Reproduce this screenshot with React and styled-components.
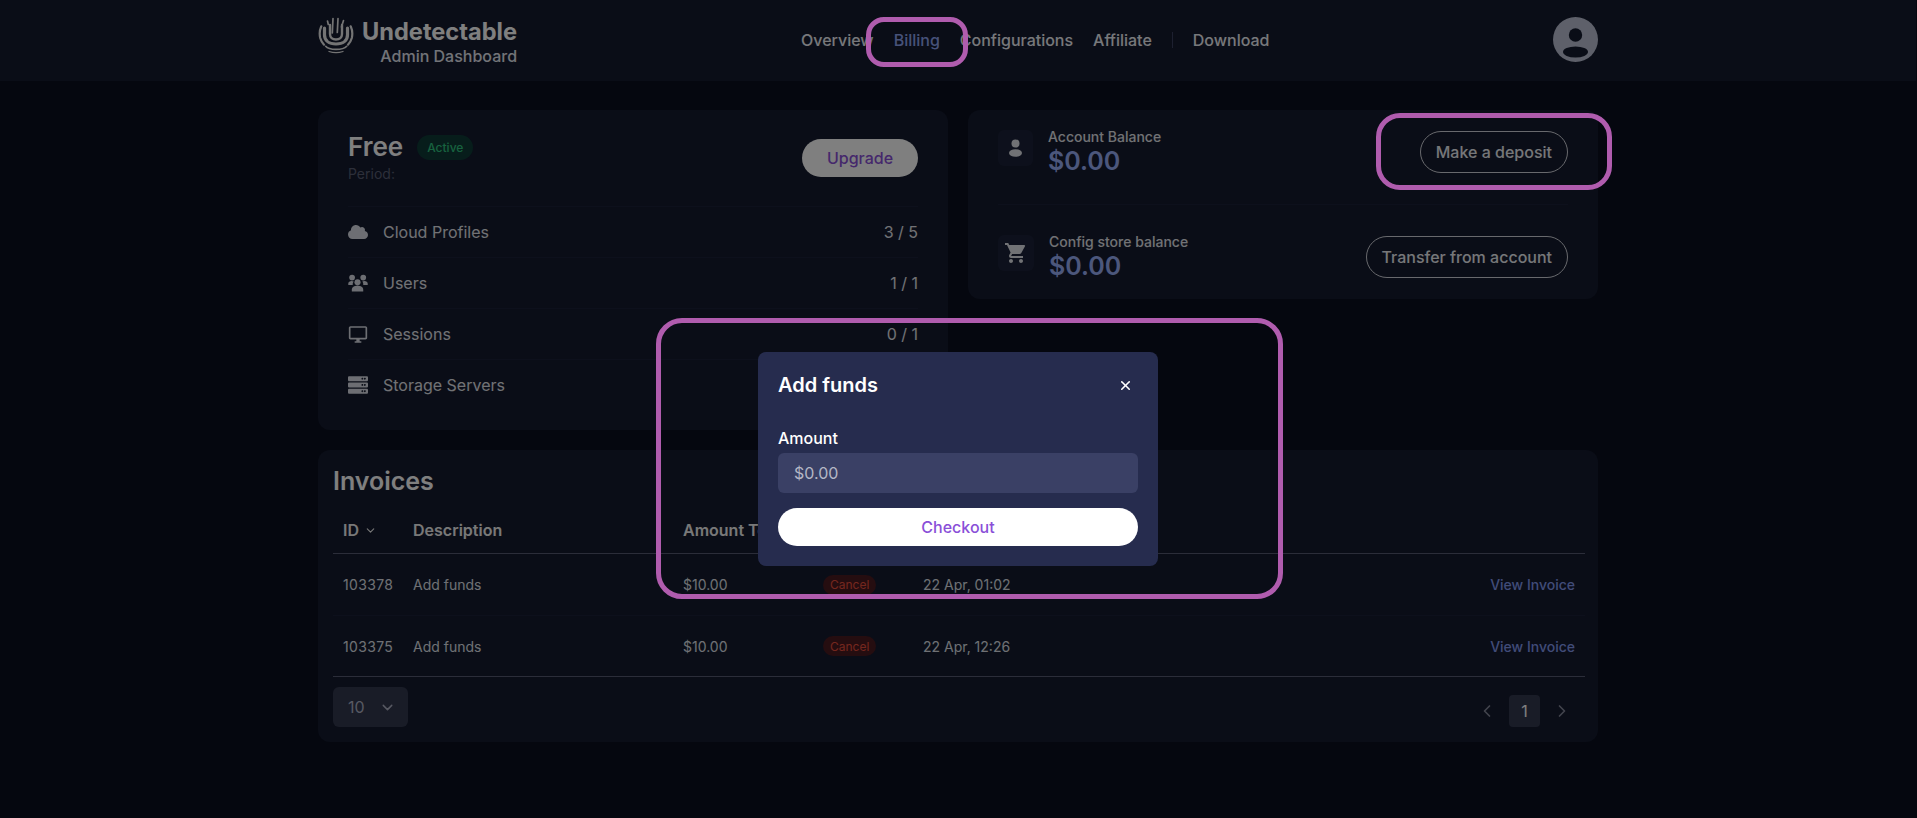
import React from "react";
import styled, { createGlobalStyle } from "styled-components";
import { FaCloud, FaServer } from "react-icons/fa";
import { MdOutlineDesktopWindows, MdShoppingCart } from "react-icons/md";
import { LuChevronDown, LuChevronLeft, LuChevronRight, LuX } from "react-icons/lu";

const Global = createGlobalStyle`
  html, body { margin: 0; padding: 0; background: #0a0e1e; }
  body { width: 1916px; font-family: Inter, "Liberation Sans", sans-serif; color: #fff; min-height: 818px; overflow: hidden; }
  * { box-sizing: border-box; }
`;

const Header = styled.header`
  height: 81px;
  background: #141a2e;
`;
const Wrap = styled.div`
  width: 1280px;
  margin: 0 auto;
`;
const HeaderInner = styled(Wrap)`
  height: 100%;
  display: grid;
  grid-template-columns: 483px auto 1fr;
  align-items: center;
`;
const Brand = styled.div`
  display: flex;
  align-items: flex-start;
  gap: 8px;
  padding-top: 3px;
`;
const BrandText = styled.div`
  display: flex;
  flex-direction: column;
  align-items: flex-end;
`;
const BrandName = styled.span`
  font-size: 23.600px;
  font-weight: 700;
  line-height: 29px;
`;
const BrandSub = styled.span`
  font-size: 16px;
  font-weight: 500;
  line-height: 21px;
  color: #e4e7f0;
`;
const Nav = styled.nav`
  display: flex;
  align-items: center;
  gap: 20px;
  margin-bottom: 2px;
`;
const NavLink = styled.a`
  font-size: 16px;
  font-weight: 500;
  color: ${(p) => (p.$active ? "#8ea4f2" : "#eef0f6")};
`;
const NavDivider = styled.span`
  width: 1px;
  height: 16px;
  background: #3a4060;
`;
const AvatarSlot = styled.div`
  display: flex;
  justify-content: flex-end;
  margin-bottom: 2px;
`;
const Main = styled(Wrap)`
  padding-top: 29px;
`;
const Columns = styled.div`
  display: grid;
  grid-template-columns: 630px 630px;
  gap: 20px;
  align-items: start;
`;
const Card = styled.section`
  background: #141a2e;
  border-radius: 12px;
`;
const PlanCard = styled(Card)`
  padding: 0 30px 20px;
`;
const PlanTop = styled.div`
  height: 96px;
  display: flex;
  align-items: center;
  justify-content: space-between;
`;
const PlanTitleRow = styled.div`
  display: flex;
  align-items: center;
  gap: 14px;
  height: 30px;
  margin-bottom: 2px;
`;
const PlanName = styled.span`
  font-size: 26px;
  font-weight: 600;
  margin-top: -2px;
`;
const ActiveBadge = styled.span`
  font-size: 12px;
  font-weight: 500;
  height: 25px;
  padding: 0 10px;
  display: flex;
  align-items: center;
  border-radius: 13px;
  color: #2fc47f;
  background: #0e3a36;
`;
const Period = styled.div`
  font-size: 14px;
  line-height: 20px;
  color: #5a5f75;
`;
const UpgradeButton = styled.button`
  width: 116px;
  height: 38px;
  border: 0;
  border-radius: 19px;
  background: #fff;
  color: #8a4fd8;
  font: 500 16px Inter, sans-serif;
`;
const StatRow = styled.div`
  height: 51px;
  display: flex;
  align-items: center;
  justify-content: space-between;
  border-top: 1px solid #1b2138;
  font-size: 16px;
  color: #e2e4ea;
`;
const StatLabel = styled.span`
  display: flex;
  align-items: center;
  gap: 15px;
`;
const StatIcon = styled.span`
  width: 20px;
  display: flex;
  justify-content: center;
  color: #dadde6;
`;
const BalanceCard = styled(Card)`
  padding: 20px 30px 18px;
`;
const BalanceRow = styled.div`
  display: flex;
  justify-content: space-between;
  align-items: flex-start;
  padding: ${(p) => (p.$second ? "30px 0 0" : "0 0 28px")};
  border-top: ${(p) => (p.$second ? "1px solid #1b2138" : "0")};
`;
const BalanceLeft = styled.div`
  display: flex;
  gap: 15px;
`;
const IconTile = styled.span`
  height: 36px;
  padding: 6px;
  display: flex;
  align-items: center;
  border-radius: 6px;
  background: #1b2138;
  color: #e2e4ea;
`;
const BalanceLabel = styled.div`
  font-size: 14px;
  font-weight: 500;
  line-height: 14px;
  color: #e2e4ea;
`;
const BalanceValue = styled.div`
  margin-top: 2px;
  font-size: 25px;
  font-weight: 600;
  line-height: 30px;
  color: #98aef8;
`;
const OutlineButton = styled.button`
  margin-top: 1px;
  height: 42px;
  padding: 0 15px;
  border: 1px solid #d0d2da;
  border-radius: 21px;
  background: transparent;
  color: #eceef3;
  font: 500 16px Inter, sans-serif;
`;
const InvoiceCard = styled(Card)`
  margin-top: 20px;
  padding: 16px 13px 15px 15px;
`;
const InvoiceTitle = styled.h2`
  margin: 0 0 11px;
  font-size: 25px;
  font-weight: 600;
  line-height: 30px;
  color: #fff;
`;
const Row = styled.div`
  display: grid;
  grid-template-columns: 70px 270px 140px 100px 1fr auto;
  align-items: center;
  height: ${(p) => p.$h}px;
  border-bottom: 1px solid ${(p) => (p.$strong ? "#565a72" : "#1b2138")};
  font-size: ${(p) => (p.$head ? 16 : 14)}px;
  font-weight: ${(p) => (p.$head ? 600 : 400)};
  color: ${(p) => (p.$head ? "#f0f0f0" : "#dfe1e8")};
`;
const Cell = styled.span`
  padding: 0 10px;
  display: flex;
  align-items: center;
  gap: 5px;
  white-space: nowrap;
`;
const IdCell = styled(Cell)`
  letter-spacing: 0.35px;
`;
const CancelBadge = styled.span`
  height: 20px;
  padding: 0 7px;
  display: flex;
  align-items: center;
  font-size: 12px;
  border-radius: 10px;
  color: #e84f3d;
  background: #4a1a20;
`;
const InvoiceLink = styled.a`
  font-weight: 500;
  color: #8298ee;
`;
const TableFoot = styled.div`
  display: flex;
  justify-content: space-between;
  align-items: flex-end;
  padding-top: 10px;
`;
const PageSize = styled.div`
  width: 75px;
  height: 40px;
  padding: 0 12px 0 15px;
  display: flex;
  align-items: center;
  justify-content: space-between;
  border-radius: 6px;
  background: #33384f;
  font-size: 16px;
  color: #aeb2c4;
`;
const Pager = styled.div`
  display: flex;
  align-items: center;
  gap: 12px;
  padding-right: 13px;
  color: #85889a;
`;
const PageNum = styled.span`
  width: 31px;
  height: 32px;
  display: flex;
  align-items: center;
  justify-content: center;
  border-radius: 4px;
  background: #33384f;
  color: #fff;
  font-size: 16px;
`;
const Overlay = styled.div`
  position: fixed;
  inset: 0;
  display: flex;
  justify-content: center;
  align-items: flex-start;
  padding: 352px 1px 0 0;
  background: rgba(0, 0, 0, 0.5);
`;
const Modal = styled.div`
  width: 400px;
  padding: 20px;
  border-radius: 8px;
  background: #262c4e;
`;
const ModalHead = styled.div`
  height: 26px;
  display: flex;
  align-items: center;
  justify-content: space-between;
  padding-right: 5px;
`;
const ModalTitle = styled.span`
  font-size: 20px;
  font-weight: 600;
`;
const FieldLabel = styled.div`
  margin-top: 29px;
  font-size: 16px;
  font-weight: 500;
  line-height: 22px;
`;
const AmountInput = styled.div`
  margin-top: 4px;
  height: 40px;
  padding: 0 16px;
  display: flex;
  align-items: center;
  border-radius: 6px;
  background: #3a4065;
  color: #b4b7c6;
  font-size: 16px;
`;
const CheckoutButton = styled.button`
  margin-top: 15px;
  width: 100%;
  height: 38px;
  border: 0;
  border-radius: 19px;
  background: #fff;
  color: #8a4fd8;
  font: 500 16px Inter, sans-serif;
`;
const Callout = styled.div`
  position: fixed;
  left: ${(p) => p.$x}px;
  top: ${(p) => p.$y}px;
  width: ${(p) => p.$w}px;
  height: ${(p) => p.$h}px;
  border: 5px solid #b05cae;
  border-radius: ${(p) => p.$r}px;
  pointer-events: none;
`;

const Logo = () => (
  <svg width="36" height="37" viewBox="0 0 36 37" fill="none" stroke="#e8e8e8" strokeLinecap="round">
    <path d="M3.300 9.300C1.600 13 1.300 17 2.200 21c.7 2.700 2 4.800 3.800 6.700" strokeWidth="2.200" />
    <path d="M32.700 9.300c1.700 3.700 2 7.700 1.100 11.700-.7 2.700-2 4.800-3.800 6.700" strokeWidth="2.200" />
    <path d="M6.500 11v7c0 5.500 4.500 9 11.500 9s11.500-3.500 11.500-9v-7" strokeWidth="3.200" />
    <path d="M12 8v9c0 3.500 2.500 5.500 6 5.500s6-2 6-5.500V8" strokeWidth="2.400" />
    <path d="M15 1.500L14.300 16M20 1.500L19.300 15.500M25.500 3.500L23.500 10M9.500 4l.8 3.500" strokeWidth="1.700" />
    <path d="M7.700 29.300C11 33.500 25 33.500 28.700 29.300" strokeWidth="1.700" />
    <path d="M11 34.500c4.500 1.500 9.500 1.500 14 0" strokeWidth="1.300" />
  </svg>
);

const UsersIcon = () => (
  <svg width="21" height="18" viewBox="8 4 21 18" fill="currentColor">
    <circle cx="12.300" cy="7.300" r="3" />
    <circle cx="24" cy="7.300" r="3" />
    <circle cx="18" cy="12.300" r="3.200" />
    <path d="M8.300 15v-1.500c0-1.500 1.500-2.500 3.500-2.500 1 0 1.700.2 2.200.5-.8.900-1.200 2.200-1 3.500zM28.700 15v-1.500c0-1.500-1.500-2.500-3.500-2.500-1 0-1.700.2-2.200.5.8.9 1.200 2.200 1 3.500z" />
    <path d="M12 22v-2c0-2.500 2.500-4 6-4s6 1.500 6 4v2z" />
  </svg>
);

const AvatarIcon = () => (
  <svg width="45" height="45" viewBox="0 0 45 45">
    <circle cx="22.500" cy="22.500" r="22.500" fill="#bcc1d4" />
    <circle cx="22.500" cy="18" r="6.700" fill="#141a2e" />
    <ellipse cx="22.500" cy="35" rx="12.500" ry="5.500" fill="#141a2e" />
  </svg>
);

const PersonIcon = () => (
  <svg width="23" height="24" viewBox="0 0 23 24" fill="currentColor">
    <circle cx="11.500" cy="7.500" r="4" />
    <ellipse cx="11.500" cy="17" rx="6.500" ry="3.800" />
  </svg>
);

const invoices = [
  { id: 103378, date: "22 Apr, 01:02", h: 62 },
  { id: 103375, date: "22 Apr, 12:26", h: 61 },
];

const stats = [
  { icon: <FaCloud size={20} />, label: "Cloud Profiles", value: "3 / 5" },
  { icon: <UsersIcon />, label: "Users", value: "1 / 1" },
  { icon: <MdOutlineDesktopWindows size={21} />, label: "Sessions", value: "0 / 1" },
  { icon: <FaServer size={20} />, label: "Storage Servers", value: "" },
];

export default function App() {
  return (
    <>
      <Global />
      <Header>
        <HeaderInner>
          <Brand>
            <Logo />
            <BrandText>
              <BrandName>Undetectable</BrandName>
              <BrandSub>Admin Dashboard</BrandSub>
            </BrandText>
          </Brand>
          <Nav>
            <NavLink>Overview</NavLink>
            <NavLink $active>Billing</NavLink>
            <NavLink>Configurations</NavLink>
            <NavLink>Affiliate</NavLink>
            <NavDivider />
            <NavLink>Download</NavLink>
          </Nav>
          <AvatarSlot>
            <AvatarIcon />
          </AvatarSlot>
        </HeaderInner>
      </Header>
      <Main>
        <Columns>
          <PlanCard>
            <PlanTop>
              <div>
                <PlanTitleRow>
                  <PlanName>Free</PlanName>
                  <ActiveBadge>Active</ActiveBadge>
                </PlanTitleRow>
                <Period>Period:</Period>
              </div>
              <UpgradeButton>Upgrade</UpgradeButton>
            </PlanTop>
            {stats.map((s) => (
              <StatRow key={s.label}>
                <StatLabel>
                  <StatIcon>{s.icon}</StatIcon>
                  {s.label}
                </StatLabel>
                <span>{s.value}</span>
              </StatRow>
            ))}
          </PlanCard>
          <BalanceCard>
            <BalanceRow>
              <BalanceLeft>
                <IconTile>
                  <PersonIcon />
                </IconTile>
                <div>
                  <BalanceLabel>Account Balance</BalanceLabel>
                  <BalanceValue>$0.00</BalanceValue>
                </div>
              </BalanceLeft>
              <OutlineButton>Make a deposit</OutlineButton>
            </BalanceRow>
            <BalanceRow $second>
              <BalanceLeft>
                <IconTile>
                  <MdShoppingCart size={24} />
                </IconTile>
                <div>
                  <BalanceLabel>Config store balance</BalanceLabel>
                  <BalanceValue>$0.00</BalanceValue>
                </div>
              </BalanceLeft>
              <OutlineButton>Transfer from account</OutlineButton>
            </BalanceRow>
          </BalanceCard>
        </Columns>
        <InvoiceCard>
          <InvoiceTitle>Invoices</InvoiceTitle>
          <Row $head $strong $h={47}>
            <Cell>
              ID <LuChevronDown size={13} />
            </Cell>
            <Cell>Description</Cell>
            <Cell>Amount Total</Cell>
            <Cell />
            <Cell />
            <Cell />
          </Row>
          {invoices.map((inv, i) => (
            <Row key={inv.id} $h={inv.h} $strong={i === invoices.length - 1}>
              <IdCell>{inv.id}</IdCell>
              <Cell>Add funds</Cell>
              <Cell>$10.00</Cell>
              <Cell>
                <CancelBadge>Cancel</CancelBadge>
              </Cell>
              <Cell>{inv.date}</Cell>
              <Cell>
                <InvoiceLink>View Invoice</InvoiceLink>
              </Cell>
            </Row>
          ))}
          <TableFoot>
            <PageSize>
              10 <LuChevronDown size={17} />
            </PageSize>
            <Pager>
              <LuChevronLeft size={20} />
              <PageNum>1</PageNum>
              <LuChevronRight size={20} />
            </Pager>
          </TableFoot>
        </InvoiceCard>
      </Main>
      <Overlay>
        <Modal>
          <ModalHead>
            <ModalTitle>Add funds</ModalTitle>
            <LuX size={15} strokeWidth={2.500} />
          </ModalHead>
          <FieldLabel>Amount</FieldLabel>
          <AmountInput>$0.00</AmountInput>
          <CheckoutButton>Checkout</CheckoutButton>
        </Modal>
      </Overlay>
      <Callout $x={866} $y={17} $w={102} $h={50} $r={18} />
      <Callout $x={1376} $y={113} $w={236} $h={77} $r={24} />
      <Callout $x={656} $y={318} $w={627} $h={281} $r={26} />
    </>
  );
}
